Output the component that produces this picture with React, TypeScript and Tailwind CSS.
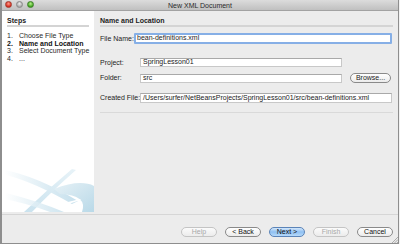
import React from "react";

const Btn = ({ label, variant }: { label: string; variant: "normal" | "disabled" | "primary" }) => {
  const cls =
    variant === "primary"
      ? "border-[#5b84b8] bg-gradient-to-b from-[#d3e7fb] via-[#8fc0f2] to-[#b7dafb] text-[#111]"
      : variant === "disabled"
      ? "border-[#c4c4c4] bg-gradient-to-b from-[#fbfbfb] to-[#ececec] text-[#a8a8a8]"
      : "border-[#8a8a8a] bg-gradient-to-b from-[#ffffff] to-[#ececec] text-[#111]";
  return (
    <div className={`w-[36px] h-[10px] rounded-full border flex items-center justify-center text-[7px] leading-[8px] whitespace-nowrap ${cls}`}>
      {label}
    </div>
  );
};

const Field = ({ children, className }: { children: React.ReactNode; className: string }) => (
  <div className={`bg-white border border-[#c8c8c8] border-t-[#a9a9a9] flex items-center px-[2px] text-[7px] text-[#1a1a1a] whitespace-nowrap overflow-hidden ${className}`}>
    {children}
  </div>
);

export default function App() {
  return (
    <div className="w-[400px] h-[244px] bg-[#f2f2f2] overflow-hidden font-['Liberation_Sans',Arial,sans-serif] text-[#1c1c1c] whitespace-nowrap">
      <div className="w-[399px] h-[244px] flex flex-col border-l-2 border-r border-b border-[#8e8e8e] bg-[#ececec]">
        {/* title bar */}
        <div className="h-[11px] relative flex items-center justify-center bg-gradient-to-b from-[#dcdcdc] to-[#c0c0c0] border-b border-[#a2a2a2]">
          <div className="absolute left-[3px] top-[1px] flex gap-[4px]">
            <div className="w-[7px] h-[7px] rounded-full bg-[radial-gradient(circle_at_50%_35%,#ff9a8a,#d5291b_70%)] border border-[#a33a2e]" />
            <div className="w-[7px] h-[7px] rounded-full bg-[radial-gradient(circle_at_50%_35%,#eeeeee,#a8a8a8_70%)] border border-[#8a8a8a]" />
            <div className="w-[7px] h-[7px] rounded-full bg-[radial-gradient(circle_at_50%_35%,#b8f08a,#3ea41f_70%)] border border-[#3e7e2a]" />
          </div>
          <span className="text-[7px] leading-[8px] text-[#2a2a2a] mt-[1px]">New XML Document</span>
        </div>

        {/* body */}
        <div className="h-[203px] flex">
          <div className="w-[92px] h-[201px] bg-white flex flex-col">
            <div className="pt-[6px] px-[5px]">
              <div className="text-[7px] leading-[7px] font-bold border-b-2 border-[#d4d4d4] pb-[1px]">Steps</div>
              <div className="mt-[5px] text-[7px] leading-[7.7px] text-[#2a2a2a]">
                <div className="flex"><span className="w-[12px] shrink-0">1.</span><span>Choose File Type</span></div>
                <div className="flex font-bold text-[#111]"><span className="w-[12px] shrink-0">2.</span><span>Name and Location</span></div>
                <div className="flex"><span className="w-[12px] shrink-0">3.</span><span>Select Document Type</span></div>
                <div className="flex"><span className="w-[12px] shrink-0">4.</span><span>...</span></div>
              </div>
            </div>
            <svg className="mt-auto" width="92" height="45" viewBox="0 0 92 45">
              <defs>
                <linearGradient id="g1" x1="0" y1="0" x2="1" y2="0">
                  <stop offset="0" stopColor="#ffffff" />
                  <stop offset="1" stopColor="#c4dfec" />
                </linearGradient>
                <linearGradient id="g2" x1="1" y1="0" x2="0" y2="1">
                  <stop offset="0" stopColor="#e8f3f8" />
                  <stop offset="1" stopColor="#c9e2ee" />
                </linearGradient>
                <linearGradient id="g3" x1="0" y1="0" x2="1" y2="1">
                  <stop offset="0" stopColor="#e6f1f6" />
                  <stop offset="1" stopColor="#b9d9e8" />
                </linearGradient>
              </defs>
              <path d="M2,3 Q35,9 76,34 L70,37 Q32,15 4,8 Z" fill="url(#g1)" />
              <path d="M70,2 L74,3 Q50,24 30,45 L22,45 Q46,22 70,2 Z" fill="url(#g2)" />
              <path d="M52,22 Q78,12 92,19 L92,45 L80,45 Q86,28 58,27 Z" fill="url(#g3)" />
              <path d="M4,26 Q36,34 62,45 L48,45 Q24,36 2,32 Z" fill="url(#g1)" opacity="0.8" />
              <path d="M62,36 L78,32 L79,33 L63,38 Z" fill="#ffffff" />
              <path d="M58,40 L76,36 L77,37 L59,42 Z" fill="#ffffff" />
            </svg>
          </div>

          <div className="flex-1 pl-[6px] pr-[5px] pt-[6px] flex flex-col">
            <div className="text-[7px] leading-[7px] font-bold border-b-2 border-[#d4d4d4] pb-[1px]">Name and Location</div>

            <div className="mt-[6px] flex items-center">
              <span className="w-[34px] shrink-0 text-[7px] leading-[8px]">File Name:</span>
              <div className="flex-1 mr-[1px] h-[11px] bg-white border-2 border-[#86afe6] rounded-[1px] flex items-center px-[1px] text-[7px] whitespace-nowrap">
                bean-definitions.xml
              </div>
            </div>

            <div className="mt-[14px] flex items-center">
              <span className="w-[40px] shrink-0 text-[7px] leading-[8px]">Project:</span>
              <Field className="w-[202px] h-[9px]">SpringLesson01</Field>
            </div>

            <div className="mt-[6px] flex items-center">
              <span className="w-[40px] shrink-0 text-[7px] leading-[8px]">Folder:</span>
              <Field className="w-[202px] h-[9px]">src</Field>
              <div className="ml-[8px] w-[41px] h-[10px] rounded-full border border-[#8a8a8a] bg-gradient-to-b from-white to-[#ececec] flex items-center justify-center text-[7px] leading-[8px]">
                Browse...
              </div>
            </div>

            <div className="mt-[10px] flex items-center">
              <span className="w-[40px] shrink-0 text-[7px] leading-[8px]">Created File:</span>
              <Field className="flex-1 min-w-0 mr-[1px] h-[10px]">/Users/surfer/NetBeansProjects/SpringLesson01/src/bean-definitions.xml</Field>
            </div>

            <div className="mt-[9px] border-t border-[#d9d9d9]" />
          </div>
        </div>

        {/* bottom */}
        <div className="flex-1 border-t border-[#d6d6d6] relative flex justify-end items-start pt-[12px] pr-[5px] gap-[8px]">
          <Btn label="Help" variant="disabled" />
          <Btn label="< Back" variant="normal" />
          <Btn label="Next >" variant="primary" />
          <Btn label="Finish" variant="disabled" />
          <Btn label="Cancel" variant="normal" />
          <svg className="absolute right-0 bottom-0" width="7" height="7" viewBox="0 0 7 7">
            <path d="M1,7 L7,1 M3.5,7 L7,3.5 M6,7 L7,6" stroke="#9a9a9a" strokeWidth="0.8" />
          </svg>
        </div>
      </div>
    </div>
  );
}
